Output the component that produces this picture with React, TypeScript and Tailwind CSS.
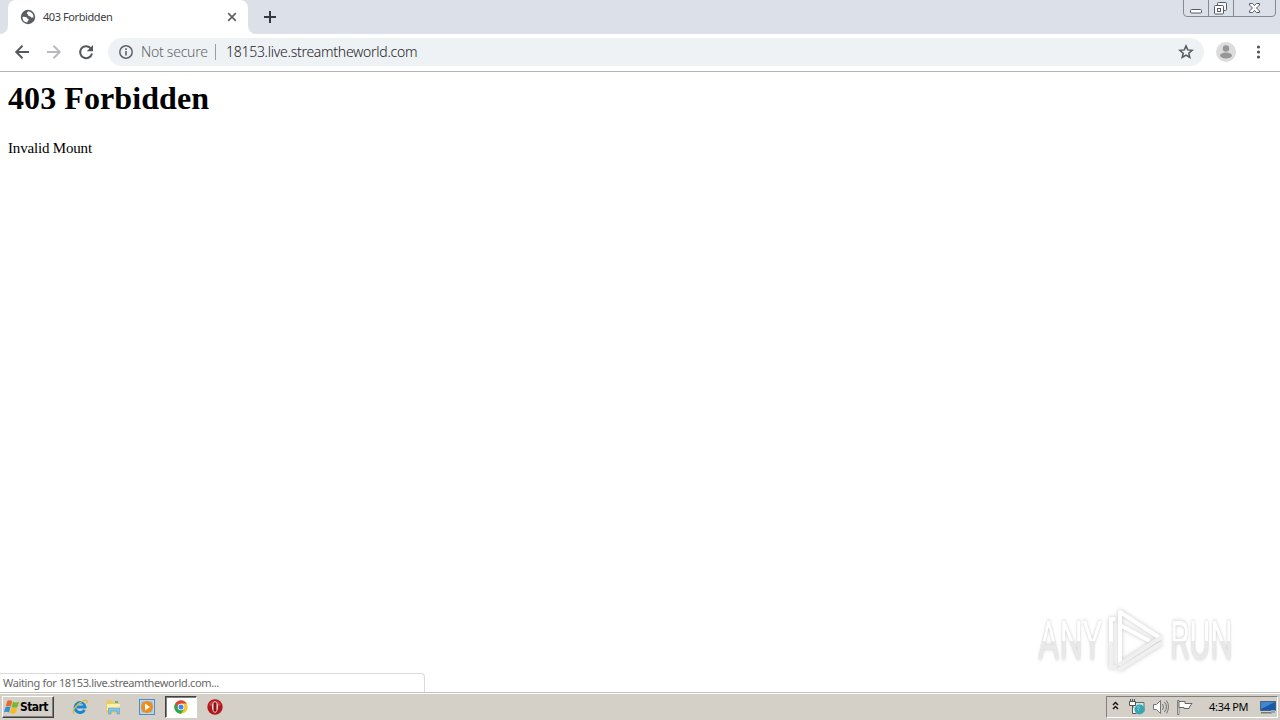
import React from "react";

const ui = "font-['Noto_Sans','Liberation_Sans',sans-serif]";

function TabStrip() {
  return (
    <div className="relative flex h-[34px] shrink-0 bg-[#dce0e8] pl-2">
      <div className="relative flex h-[34px] w-[240px] items-center rounded-t-lg bg-white pl-3 pr-[11px]">
        <svg className="absolute bottom-0 -left-2 size-2" viewBox="0 0 8 8"><path d="M8 0v8H0a8 8 0 0 0 8-8" fill="#fff" /></svg>
        <svg className="absolute bottom-0 -right-2 size-2" viewBox="0 0 8 8"><path d="M0 0v8h8a8 8 0 0 1-8-8" fill="#fff" /></svg>
        <svg className="size-4 shrink-0" viewBox="0 0 16 16">
          <circle cx="8" cy="8" r="7.2" fill="#5a5d61" />
          <path d="M8.500 2.300C8 3.300 6.800 3.300 6.800 4.300s1.500.9 1.400 2 1.600.5 2.200 1.300.2 1 1.200 1h1.900A5.600 5.600 0 0 0 8.500 2.300M2.500 7.900c1.600-.2 3.300-.1 4.300.6s.3 1.500 1.300 1.600.9 1.100.2 1.500-.6 1.200-1 1.900A5.500 5.500 0 0 1 2.500 7.900" fill="#fff" />
        </svg>
        <span className={`${ui} ml-[7px] grow whitespace-nowrap text-[11px] leading-4 tracking-[-0.42px] text-[#3c4043]`}>403 Forbidden</span>
        <svg className="size-[10px] shrink-0" viewBox="0 0 10 10"><path d="m1.2 1.2 7.6 7.6m0-7.6L1.2 8.8" stroke="#5f6368" strokeWidth="1.7" /></svg>
      </div>
      <svg className="ml-4 mt-[11px] size-3" viewBox="0 0 12 12"><path d="M6 0v12M0 6h12" stroke="#35383c" strokeWidth="2" /></svg>
      <svg className="absolute right-[4px] top-0 h-[18px] w-[93px]" viewBox="0 0 93 18" fill="none">
        <path d="M.5 0v13q0 3.500 3.500 3.500h85q3.500 0 3.500-3.500V0M25.500 0v16M50.500 0v16" stroke="#858b96" />
        <rect x="7.500" y="9.500" width="11" height="3.500" rx="1" fill="#fff" stroke="#555a64" />
        <rect x="34.500" y="2.500" width="9" height="8" rx="1" fill="#f5f6f8" stroke="#555a64" />
        <rect x="31.500" y="5.500" width="9" height="8.500" rx="1" fill="#fff" stroke="#555a64" />
        <rect x="34.500" y="8.500" width="3" height="3" stroke="#555a64" />
        <path d="M66.500 3.500h3l2 2 2-2h3v1.500l-3 3 3 3v1.500h-3l-2-2-2 2h-3V11l3-3-3-3z" fill="#fff" stroke="#555a64" />
      </svg>
    </div>
  );
}

function Toolbar() {
  return (
    <div className="flex h-[38px] shrink-0 items-center border-b border-[#b4b4b4] bg-white pb-px">
      <svg className="ml-[14px] h-4 w-[82px] shrink-0" viewBox="0 0 82 16" fill="none">
        <path d="M15 8H2m6.500-6.200L2.200 8l6.300 6.200" stroke="#55585c" strokeWidth="1.900" />
        <path d="M33 8h13m-6.500-6.200L45.800 8l-6.300 6.200" stroke="#b9babd" strokeWidth="1.900" />
        <path d="M76.500 4A6 6 0 1 0 78 9.500" stroke="#55585c" strokeWidth="2" />
        <path d="M79 1v6.200h-6.200z" fill="#55585c" />
      </svg>
      <div className="ml-[12px] flex h-7 w-[1096px] shrink-0 items-center rounded-full bg-[#eff2f5] pl-[11px] pr-[10px]">
        <svg className="size-[14px] shrink-0" viewBox="0 0 14 14"><circle cx="7" cy="7" r="6.200" fill="none" stroke="#5f6368" strokeWidth="1.500" /><path d="M7 6v4.500M7 3.300v1.600" stroke="#5f6368" strokeWidth="1.600" /></svg>
        <span className={`${ui} ml-2 w-[67px] whitespace-nowrap text-[14px] font-light leading-5 tracking-[-0.25px] text-[#5f6368]`}>Not secure</span>
        <span className="ml-[7px] h-4 w-px bg-[#9a9da1]" />
        <span className={`${ui} ml-[10px] grow whitespace-nowrap text-[14px] font-light leading-5 tracking-[-0.27px] text-[#202124]`}>18153.live.streamtheworld.com</span>
        <svg className="size-4 shrink-0" viewBox="0 0 16 16"><path d="m8 1.900 1.700 4 4.400.4-3.300 2.900 1 4.300L8 11.200l-3.800 2.300 1-4.300-3.300-2.900 4.400-.4z" fill="none" stroke="#55585c" strokeWidth="1.500" /></svg>
      </div>
      <svg className="ml-3 size-5 shrink-0" viewBox="0 0 20 20"><circle cx="10" cy="10" r="10" fill="#dcdcdc" /><circle cx="10" cy="6.500" r="3.200" fill="#969696" /><ellipse cx="10" cy="13.500" rx="6" ry="3" fill="#969696" /></svg>
      <svg className="ml-[20px] h-4 w-[5px] shrink-0" viewBox="0 0 5 16" fill="#505357"><circle cx="2.500" cy="3" r="1.600" /><circle cx="2.500" cy="8" r="1.600" /><circle cx="2.500" cy="13" r="1.600" /></svg>
    </div>
  );
}

function Watermark() {
  const word = "font-['Roboto','Liberation_Sans',sans-serif] inline-block origin-left whitespace-nowrap text-[53px] leading-[60px] font-normal text-transparent bg-clip-text bg-linear-to-b from-white from-50% to-[#e9e9e9] to-50% drop-shadow-[0_0_2px_#c5c5c5]";
  return (
    <div className="absolute right-[42px] bottom-[18px] flex h-[66px] w-[200px] items-center">
      <div className="w-[66px]"><span className={`${word} scale-x-[.62]`}>ANY</span></div>
      <svg className="h-[66px] w-[64px] shrink-0 drop-shadow-[0_0_2px_#c5c5c5]" viewBox="0 0 64 66" fill="none" strokeLinejoin="round" strokeLinecap="round">
        <path d="M16 56V4l40 26" stroke="#fff" strokeWidth="4" />
        <path d="M16 56l40-26" stroke="#efefef" strokeWidth="4" />
        <path d="M10 11H7v24" stroke="#fff" strokeWidth="4" />
        <path d="M7 35v24h3M16 61l40-25" stroke="#f0f0f0" strokeWidth="4" />
        <path d="M16 17l28 15" stroke="#fff" strokeWidth="4" />
      </svg>
      <div className="ml-[2px] w-[66px]"><span className={`${word} scale-x-[.6]`}>RUN</span></div>
    </div>
  );
}

function Taskbar() {
  return (
    <div className="flex h-[28px] shrink-0 items-center border-t border-[#c4c2bb] bg-[#d4d0c8] shadow-[inset_0_1px_0_#fff]">
      <div className="ml-[2px] mt-px flex h-[22px] w-[52px] shrink-0 items-center border-t border-l border-r border-b border-t-white border-l-white border-r-[#404040] border-b-[#404040] pl-px shadow-[inset_-1px_-1px_0_#808080]">
        <svg className="h-4 w-4 shrink-0" viewBox="0 0 16 16">
          <path d="M3.300 1.900C5 .9 6.700 1.200 8.200 2.300L6.700 7.600C5 6.500 3.400 6.600 1.700 7.300z" fill="#ed662c" />
          <path d="M8.900 2.700c2 1 4.100.8 6.200 0L13.500 8c-2 1-4 .8-6-.1z" fill="#79b72d" />
          <path d="M1.500 8c1.700-.9 3.400-.7 5 .1L5 13.500c-1.700-1-3.300-1-5-.2z" fill="#358ed4" />
          <path d="M7.200 8.600c2 .9 4 1 6 .1L11.700 14c-2 1-4 .9-6 0z" fill="#f8ba26" />
        </svg>
        <span className="whitespace-nowrap font-['DejaVu_Sans_Condensed','DejaVu_Sans',sans-serif] text-[12px] leading-4 font-bold tracking-[-0.55px] text-black">Start</span>
      </div>
      <svg className="ml-[18px] size-4 shrink-0" viewBox="0 0 16 16" fill="none">
        <path d="M12.500 10.800A5 5 0 1 1 13 8H5" stroke="#1687d2" strokeWidth="2.900" />
        <path d="M4.600 6.800A4 4 0 0 1 11 6" stroke="#76cff5" strokeWidth="1" />
        <path d="M2 14.500C-1 12 5.500 4 12 1.500c3-1 4 .5 2.500 3" stroke="#e0b63f" strokeWidth="1.300" />
      </svg>
      <svg className="ml-[17px] size-4 shrink-0" viewBox="0 0 16 16">
        <path d="M1 2.500 2.500 1H7l1 2h6v11H1z" fill="#e9cb6c" /><path d="M2 5h13l-1 6H2z" fill="#fff0a8" />
        <path d="M3.500 15V9h11v6h-2.500v-3H6v3z" fill="#80c5ec" stroke="#559cc9" strokeWidth=".6" /><path d="M10 2h3v2h-3z" fill="#5db57f" />
      </svg>
      <svg className="ml-[18px] size-4 shrink-0" viewBox="0 0 16 16"><rect x=".5" y=".5" width="15" height="15" fill="#b5daf2" stroke="#508dbc" /><rect x="2.500" y="2.500" width="11" height="11" fill="#8ebcdd" /><circle cx="8" cy="8" r="6" fill="#f38b18" /><path d="m6 4.500 5 3.500-5 3.500z" fill="#fff" /></svg>
      <div className="ml-[10px] mt-px flex h-[22px] w-[32px] shrink-0 items-center justify-center border-t border-l border-r border-b border-t-[#404040] border-l-[#404040] border-r-white border-b-white bg-white shadow-[inset_1px_1px_0_#808080]">
        <svg className="size-[14px]" viewBox="0 0 14 14"><circle cx="7" cy="7" r="6.700" fill="#f5c728" /><path d="M7 7 1.200 3.600A6.700 6.700 0 0 0 7 13.700L10 9z" fill="#2ca653" /><path d="M4.300 7.500 1.200 3.600A6.700 6.700 0 0 1 12.800 3.600H7z" fill="#df4634" /><circle cx="7" cy="7" r="3.300" fill="#fff" /><circle cx="7" cy="7" r="2.500" fill="#4584ed" /></svg>
      </div>
      <svg className="ml-[10px] size-4 shrink-0" viewBox="0 0 16 16"><circle cx="8" cy="8" r="7.700" fill="#b0181e" /><path d="M2 6a6.500 6.500 0 0 1 12 0c-3 2-9 2-12 0" fill="#cd4145" /><ellipse cx="8" cy="8" rx="3" ry="5.800" fill="#f3e7e7" /><rect x="6.500" y="3.200" width="3" height="9.600" rx="1.400" fill="#8c1116" /></svg>
      <div className="mt-px ml-auto mr-[2px] flex h-[22px] w-[172px] shrink-0 items-center border-t border-l border-r border-b border-t-[#808080] border-l-[#808080] border-r-white border-b-white">
        <svg className="mb-[3px] ml-[5px] h-[9px] w-[7px] shrink-0" viewBox="0 0 7 9" fill="none"><path d="m1 4 2.500-2.500L6 4M1 8l2.500-2.500L6 8" stroke="#111" strokeWidth="1.400" /></svg>
        <svg className="ml-[10px] size-4 shrink-0" viewBox="0 0 16 16">
          <path d="M4 3.500h11v9H4z" fill="#cce4e8" stroke="#626d70" /><path d="M.5 2.500h6v4h-6zM1.500 0v2M3.500 0v2M5.500 0v2M3.500 7v7.500h4" fill="#fff" stroke="#555" /><circle cx="10.500" cy="10.500" r="5" fill="#37a6b1" /><path d="M8 8.500c2-2 3 0 2 1s-2 1 0 2" fill="none" stroke="#8bd8d7" />
        </svg>
        <svg className="ml-2 size-4 shrink-0" viewBox="0 0 16 16" fill="none" stroke="#777"><path d="M.5 5.500h3l4-4v13l-4-4h-3z" fill="#fff" /><path d="M9.500 5q2 3 0 6M11.500 3q4 5 0 10M13.500 1.500q4 6 0 13" /></svg>
        <svg className="ml-2 size-4 shrink-0" viewBox="0 0 16 16"><path d="M.5 1.500H2v14H.5z" fill="#fff" stroke="#666" strokeWidth=".8" /><path d="M2 2.500h6v2h7L13 7l-1 2.500H7V8.500H2z" fill="#fff" stroke="#666" /></svg>
        <span className={`${ui} ml-4 w-[39px] whitespace-nowrap text-[11px] leading-4 tracking-[-0.3px] text-black`}>4:34 PM</span>
        <svg className="ml-[12px] h-[13px] w-4 shrink-0" viewBox="0 0 16 13"><path d="M.5.5h15v9H.5z" fill="#1858aa" stroke="#47627f" /><path d="M1 1h14L1 8z" fill="#4286cd" /><path d="M1 11h11v1.500H1z" fill="#777" /><path d="M11 9h4v3h-4z" fill="#8ea7bd" /></svg>
      </div>
    </div>
  );
}

export default function App() {
  return (
    <div className="flex h-[720px] w-[1280px] flex-col overflow-hidden bg-white">
      <TabStrip />
      <Toolbar />
      <main className="relative flex grow flex-col pl-2 font-['Liberation_Serif',serif] text-black">
        <h1 className="mt-[8px] text-[32px] leading-[37px] font-bold tracking-[0.08px]">403 Forbidden</h1>
        <p className="mt-[22px] text-[15px] leading-[18px] tracking-[-0.18px]">Invalid Mount</p>
        <Watermark />
        <div className={`${ui} absolute bottom-0 left-0 flex h-[19px] w-[425px] items-center rounded-tr-[4px] border-t border-r border-[#dadada] bg-white pl-[3px] text-[11px] leading-4 whitespace-nowrap tracking-[-0.35px] text-[#686868]`}>Waiting for 18153.live.streamtheworld.com...</div>
      </main>
      <Taskbar />
    </div>
  );
}
